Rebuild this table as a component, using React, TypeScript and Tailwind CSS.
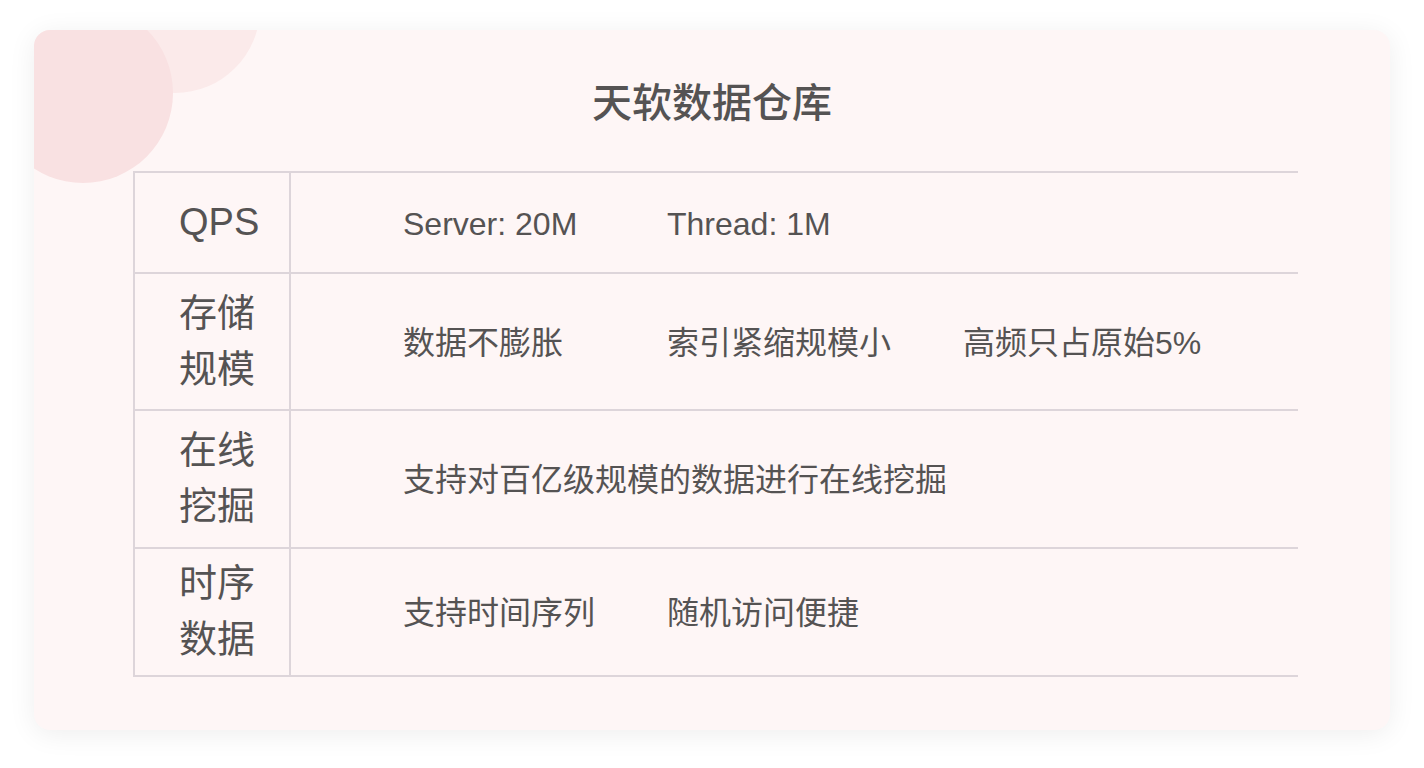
const font = { fontFamily: '"Liberation Sans", "Noto Sans CJK SC", sans-serif' };

type Row = { label: string[]; items: string[]; height: string };

const rows: Row[] = [
  { label: ["QPS"], items: ["Server: 20M", "Thread: 1M"], height: "h-[101px]" },
  { label: ["存储", "规模"], items: ["数据不膨胀", "索引紧缩规模小", "高频只占原始5%"], height: "h-[137px]" },
  { label: ["在线", "挖掘"], items: ["支持对百亿级规模的数据进行在线挖掘"], height: "h-[138px]" },
  { label: ["时序", "数据"], items: ["支持时间序列", "随机访问便捷"], height: "h-[128px]" },
];

export default function App() {
  return (
    <div className="min-h-screen w-full bg-white pt-[30px] pl-[34px]" style={font}>
      <div className="relative w-[1356px] h-[700px] overflow-hidden rounded-2xl bg-[#fef6f6] shadow-[0_4px_28px_rgba(0,0,0,0.07)]">
        {/* decorative circles */}
        <div className="absolute left-[56px] top-[-107px] w-[170px] h-[170px] rounded-full bg-[#fbeaea]" />
        <div className="absolute left-[-41px] top-[-27px] w-[180px] h-[180px] rounded-full bg-[#f9e1e2]" />

        <div className="relative flex flex-col pt-[46px]">
          <h1 className="text-center text-[40px] leading-[55px] font-medium text-[#555353]">天软数据仓库</h1>

          <div className="mt-[40px] ml-[99px] w-[1165px] border-t-2 border-l-2 border-[#ddd5da]">
            {rows.map((row) => (
              <div key={row.label.join("")} className={`flex ${row.height} border-b-2 border-[#ddd5da]`}>
                <div className="w-[156px] shrink-0 border-r-2 border-[#ddd5da] flex flex-col justify-center pl-[44px] pb-[2px] text-[38px] leading-[56px] text-[#555353]">
                  {row.label.map((l) => (
                    <span key={l}>{l}</span>
                  ))}
                </div>
                <div className="flex items-center gap-[72px] pl-[112px] pt-[2px] text-[32px] text-[#555353]">
                  {row.items.map((it) => (
                    <span key={it} className="min-w-[192px] whitespace-nowrap">
                      {it}
                    </span>
                  ))}
                </div>
              </div>
            ))}
          </div>
        </div>
      </div>
    </div>
  );
}
